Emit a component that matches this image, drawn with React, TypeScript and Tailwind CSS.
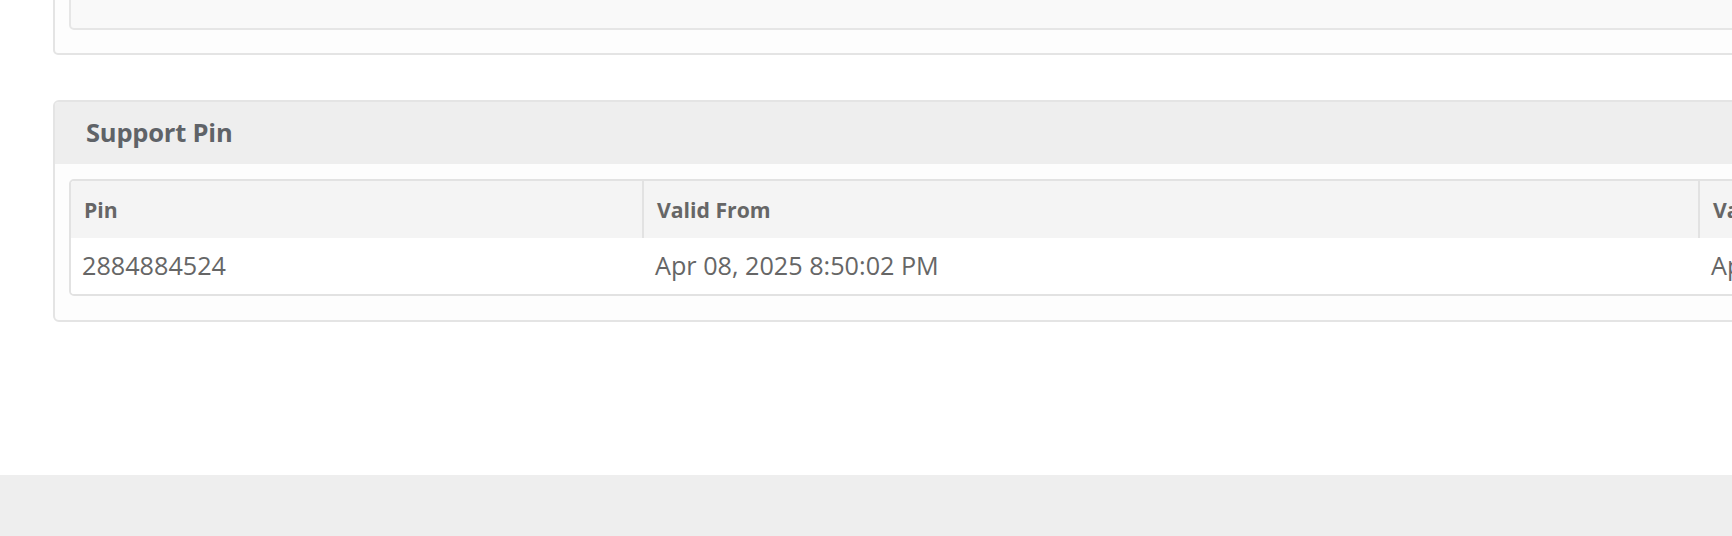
import React from 'react';

type PinRow = { pin: string; validFrom: string; validTo: string };

const rows: PinRow[] = [
  { pin: '2884884524', validFrom: 'Apr 08, 2025 8:50:02 PM', validTo: 'Apr 08, 2025 9:50:02 PM' },
];

const App: React.FC = () => {
  return (
    <div className="w-[1732px] h-[536px] overflow-hidden bg-white flex flex-col font-['Open_Sans',sans-serif]">
      <div className="flex-1 pl-[53px]">
        {/* previous card, cut off at the top */}
        <div className="w-[2600px] -mt-[27px] bg-[#fdfdfd] border-2 border-[#e4e4e4] rounded-[5px] px-[14px] pb-[23px]">
          <div className="h-[55px] bg-[#f9f9f9] border-2 border-[#e6e6e6] rounded-[5px]"></div>
        </div>

        <div className="w-[2600px] mt-[45px] bg-[#fdfdfd] border-2 border-[#e4e4e4] rounded-[6px] overflow-hidden">
          <div className="h-[64px] bg-[#eeeeee] flex items-center pl-[31px] -mt-[2px]">
            <h3 className="text-[25.5px] font-bold text-[#5f6368] tracking-[-0.2px]">Support Pin</h3>
          </div>
          <div className="px-[14px] pt-[15px] pb-[24px]">
            <div className="border-2 border-[#e2e2e2] rounded-[5px] overflow-hidden text-[#666666]">
              <div className="grid grid-cols-[571px_1056px_1fr] h-[57px] bg-[#f4f4f4] items-stretch">
                <div className="flex items-center pl-[13px] text-[21.2px] font-bold">Pin</div>
                <div className="flex items-center pl-[13px] text-[21.2px] font-bold border-l-2 border-[#e2e2e2]">Valid From</div>
                <div className="flex items-center pl-[13px] text-[21.2px] font-bold border-l-2 border-[#e2e2e2]">Valid To</div>
              </div>
              {rows.map((r) => (
                <div key={r.pin} className="grid grid-cols-[571px_1056px_1fr] h-[56px] bg-white items-center text-[25.2px]">
                  <div className="pl-[11px]">{r.pin}</div>
                  <div className="pl-[13px]">{r.validFrom}</div>
                  <div className="pl-[13px]">{r.validTo}</div>
                </div>
              ))}
            </div>
          </div>
        </div>
      </div>
      <footer className="h-[61px] bg-[#eeeeee]"></footer>
    </div>
  );
};

export default App;
